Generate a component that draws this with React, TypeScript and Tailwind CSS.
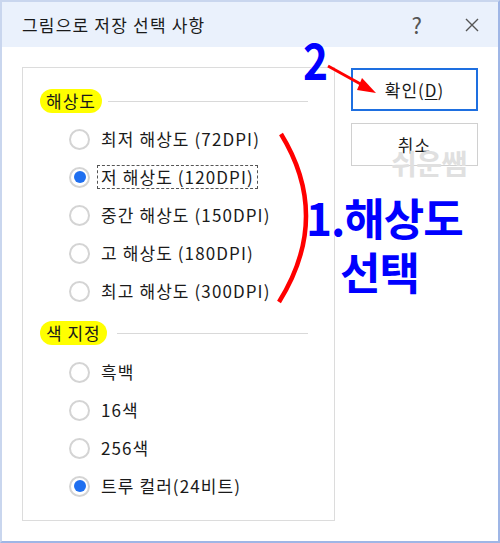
import React from "react";

const font = { fontFamily: '"Noto Sans CJK KR", "Noto Sans", sans-serif' };

function Radio({ checked }: { checked?: boolean }) {
  return (
    <span className="flex h-[21px] w-[21px] items-center justify-center rounded-full border-2 border-[#d4d4d4] bg-white">
      {checked && <span className="h-[12px] w-[12px] rounded-full bg-[#1f6ff0]" />}
    </span>
  );
}

function Row({ label, checked, focus }: { label: string; checked?: boolean; focus?: boolean }) {
  return (
    <div className="flex h-[38px] items-center gap-[7px] pl-[46px]">
      <Radio checked={checked} />
      <span
        className={
          "text-[17px] leading-[22px] tracking-[1.1px] text-[#1a1a1a] px-[3px] " +
          (focus ? "border border-dashed border-[#555]" : "border border-transparent")
        }
      >
        {label}
      </span>
    </div>
  );
}

function Header({ label, lineLeft }: { label: string; lineLeft: string }) {
  return (
    <div className="flex h-[24px] items-center pl-[17px]">
      <span className="rounded-full bg-[#ffff00] px-[6px] text-[17px] leading-[24px] tracking-[1px] text-[#1a1a1a]">{label}</span>
      <span className={"h-px flex-1 bg-[#d9d9d9] mr-[26px] " + lineLeft} />
    </div>
  );
}

export default function App() {
  return (
    <div style={font} className="relative h-[543px] w-[500px] overflow-hidden border-2 border-[#9fb6e6] border-t-[#c9d6ee] border-l-[#c9d6ee] bg-white">
      <div className="flex h-[45px] items-center bg-[#eaf1fc] pl-[20px] pr-[16px]">
        <span className="text-[17px] tracking-[1.2px] text-[#1a1a1a]">그림으로 저장 선택 사항</span>
        <span className="ml-auto mr-[42px] text-[22px] text-[#555]">?</span>
        <svg width="16" height="16" viewBox="0 0 16 16" className="mr-[2px]">
          <path d="M2 2 L14 14 M14 2 L2 14" stroke="#555" strokeWidth="1.4" />
        </svg>
      </div>
      <div className="flex pl-[20px] pt-[20px]">
        <div className="h-[454px] w-[313px] border border-[#dcdcdc] pt-[21px]">
          <Header label="해상도" lineLeft="ml-[6px]" />
          <div className="mt-[7px]">
            <Row label="최저 해상도 (72DPI)" />
            <Row label="저 해상도 (120DPI)" checked focus />
            <Row label="중간 해상도 (150DPI)" />
            <Row label="고 해상도 (180DPI)" />
            <Row label="최고 해상도 (300DPI)" />
          </div>
          <div className="mt-[11px]">
            <Header label="색 지정" lineLeft="ml-[10px]" />
          </div>
          <div className="mt-[8px]">
            <Row label="흑백" />
            <Row label="16색" />
            <Row label="256색" />
            <Row label="트루 컬러(24비트)" checked />
          </div>
        </div>
        <div className="ml-[16px] flex flex-col gap-[12px] pt-[1px]">
          <div className="flex h-[43px] w-[127px] items-center justify-center border-2 border-[#1e6fe0] bg-white text-[17px] tracking-[1px] text-[#1a1a1a]">
            확인(<span className="underline underline-offset-2">D</span>)
          </div>
          <div className="flex h-[43px] w-[127px] items-start justify-center border border-[#d0d0d0] bg-white pt-[8px] text-[17px] tracking-[1px] text-[#1a1a1a]">
            취소
          </div>
        </div>
      </div>

      {/* watermark */}
      <div className="absolute left-[389px] top-[145px] text-[28px] font-bold leading-[32px] tracking-[-0.5px] text-[#e0e0e0]">쉬운쌤</div>

      {/* red arc and arrow */}
      <svg className="absolute left-0 top-0" width="500" height="543" viewBox="0 0 500 543">
        <path d="M279 132 Q330 215 277 300" fill="none" stroke="#ff0000" strokeWidth="4.5" />
        <path d="M326 64 L364 85" stroke="#ff0000" strokeWidth="3" />
        <path d="M374 91 L360 76 L355 88 Z" fill="#ff0000" />
      </svg>

      <div
        className="absolute left-[301px] top-[26px] origin-left scale-x-[0.85] text-[50px] font-bold leading-[60px] text-[#0000ff]"
        style={{ textShadow: "0 0 2px #fff, 0 0 2px #fff" }}
      >
        2
      </div>
      <div
        className="absolute left-[304px] top-[192px] text-[44px] font-bold leading-[46px] tracking-[-1px] text-[#0000ff]"
        style={{ textShadow: "0 0 2px #fff, 0 0 2px #fff" }}
      >
        1.해상도
      </div>
      <div
        className="absolute left-[338px] top-[246px] text-[44px] font-bold leading-[46px] tracking-[-1px] text-[#0000ff]"
        style={{ textShadow: "0 0 2px #fff, 0 0 2px #fff" }}
      >
        선택
      </div>
    </div>
  );
}
